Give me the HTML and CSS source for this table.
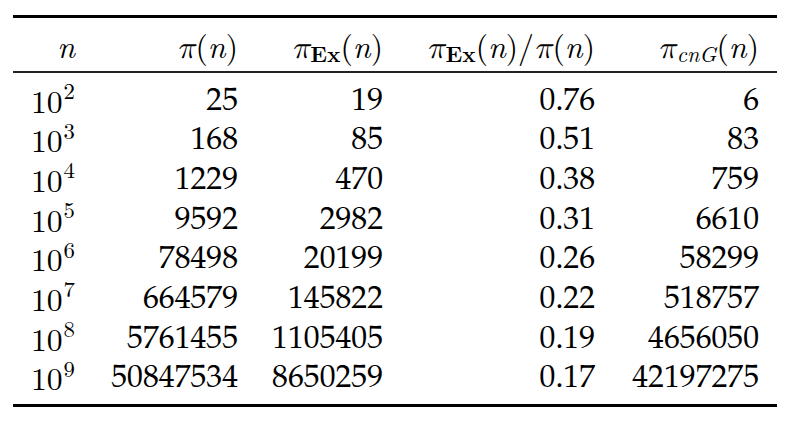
FILE: index.html
```html
<!DOCTYPE html>
<html lang="en">
<head>
    <meta charset="UTF-8">
    <title>Prime counts</title>
    <link rel="stylesheet" href="styles.css">
</head>
<body>
    <div class="booktab">
        <table class="primes">
            <colgroup>
                <col class="col-n">
                <col class="col-pi">
                <col class="col-ex">
                <col class="col-ratio">
                <col class="col-cng">
            </colgroup>
            <thead>
                <tr>
                    <th><span class="mi">n</span></th>
                    <th><span class="mi">π</span>(<span class="mi">n</span>)</th>
                    <th><span class="mi">π</span><sub class="bf">Ex</sub>(<span class="mi">n</span>)</th>
                    <th><span class="mi">π</span><sub class="bf">Ex</sub>(<span class="mi">n</span>)/<span class="mi">π</span>(<span class="mi">n</span>)</th>
                    <th><span class="mi">π</span><sub class="it">cnG</sub>(<span class="mi">n</span>)</th>
                </tr>
            </thead>
            <tbody>
                <tr><td class="pow">10<sup>2</sup></td><td>25</td><td>19</td><td>0.76</td><td>6</td></tr>
                <tr><td class="pow">10<sup>3</sup></td><td>168</td><td>85</td><td>0.51</td><td>83</td></tr>
                <tr><td class="pow">10<sup>4</sup></td><td>1229</td><td>470</td><td>0.38</td><td>759</td></tr>
                <tr><td class="pow">10<sup>5</sup></td><td>9592</td><td>2982</td><td>0.31</td><td>6610</td></tr>
                <tr><td class="pow">10<sup>6</sup></td><td>78498</td><td>20199</td><td>0.26</td><td>58299</td></tr>
                <tr><td class="pow">10<sup>7</sup></td><td>664579</td><td>145822</td><td>0.22</td><td>518757</td></tr>
                <tr><td class="pow">10<sup>8</sup></td><td>5761455</td><td>1105405</td><td>0.19</td><td>4656050</td></tr>
                <tr><td class="pow">10<sup>9</sup></td><td>50847534</td><td>8650259</td><td>0.17</td><td>42197275</td></tr>
            </tbody>
        </table>
    </div>
</body>
</html>
```

FILE: styles.css
```css
:root {
    --ink: #000000;
    --paper: #ffffff;
    --heavy-rule: 3px;
    --light-rule: 2px;
    --row-height: 39.7px;
    --text-shift: 8px;
    --text-font: "TeX Gyre Pagella", "Liberation Serif", serif;
    --math-font: "Latin Modern Roman", "Latin Modern Math", "Liberation Serif", serif;
}

body {
    margin: 0;
    background-color: var(--paper);
    color: var(--ink);
    font-family: var(--text-font);
    font-size: 31.7px;
}

.booktab {
    width: 764px;
    margin: 15px 0 0 13px;
    border-top: var(--heavy-rule) solid var(--ink);
    border-bottom: var(--heavy-rule) solid var(--ink);
}

.primes {
    width: 100%;
    table-layout: fixed;
    border-collapse: separate;
    border-spacing: 0;
}

.col-n { width: 62px; }
.col-pi { width: 163px; }
.col-ex { width: 145px; }
.col-ratio { width: 212px; }
.col-cng { width: 182px; }

.primes th,
.primes td {
    padding: 0;
    text-align: right;
    vertical-align: top;
    white-space: nowrap;
    font-family: var(--text-font);
    font-weight: normal;
}

.primes th,
.primes td.pow {
    font-family: var(--math-font);
}

.primes th:last-child,
.primes td:last-child {
    padding-right: 18px;
}

.primes th {
    height: 53px;
    line-height: 53px;
    border-bottom: var(--light-rule) solid #222;
}

/* Pagella sits higher than Latin Modern in the same line box */
.primes td {
    padding-top: var(--text-shift);
    line-height: calc(var(--row-height) - var(--text-shift));
}

.primes td.pow {
    padding-top: 0;
    line-height: var(--row-height);
}

.primes tbody tr:first-child td {
    padding-top: calc(6.5px + var(--text-shift));
}

.primes tbody tr:first-child td.pow {
    padding-top: 6.5px;
}

.primes tbody tr:last-child td {
    padding-bottom: 7px;
}

.mi {
    font-style: italic;
}

sub {
    font-size: 0.7em;
    line-height: 0;
    vertical-align: -0.2em;
}

sub.bf {
    font-weight: bold;
    font-style: normal;
}

sub.it {
    font-style: italic;
}

.pow sup {
    margin-left: 1px;
    font-size: 0.72em;
    line-height: 0;
    vertical-align: 0.6em;
}
```
